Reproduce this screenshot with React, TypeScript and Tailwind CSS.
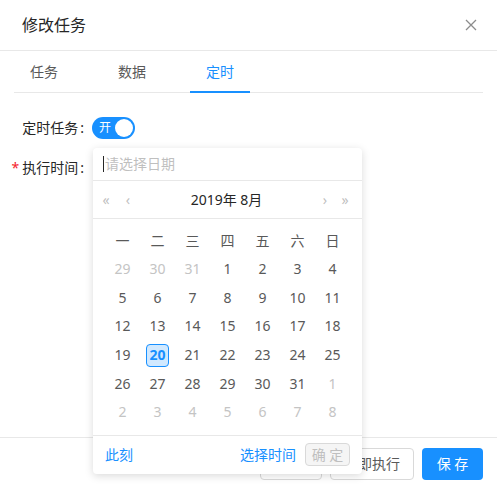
import React from "react";

const weekDays = ["一", "二", "三", "四", "五", "六", "日"];

type Day = { n: number; other: boolean };

const buildDays = (): Day[] => {
  const days: Day[] = [];
  [29, 30, 31].forEach((n) => days.push({ n, other: true }));
  for (let i = 1; i <= 31; i++) days.push({ n: i, other: false });
  for (let i = 1; i <= 8; i++) days.push({ n: i, other: true });
  return days;
};

const DatePanel: React.FC = () => {
  const days = buildDays();
  const rows: Day[][] = [];
  for (let i = 0; i < days.length; i += 7) rows.push(days.slice(i, i + 7));

  return (
    <div className="absolute left-[93px] top-[148px] w-[269px] rounded bg-white shadow-[0_2px_8px_rgba(0,0,0,0.15)] text-sm">
      {/* input */}
      <div className="h-[33px] flex items-center px-[10px] border-b border-[#e8e8e8]">
        <span className="w-px h-[16px] bg-[#262626] mr-px" />
        <span className="text-[#bfbfbf]">请选择日期</span>
      </div>
      {/* header */}
      <div className="h-[38px] flex items-center pl-[6px] pr-[10px] border-b border-[#e8e8e8] text-[#bfbfbf]">
        <span className="w-[14px] text-center">«</span>
        <span className="w-[14px] ml-[8px] text-center">‹</span>
        <span className="flex-1 text-center text-[#262626]">2019年 8月</span>
        <span className="w-[14px] mr-[6px] text-center">›</span>
        <span className="w-[14px] text-center">»</span>
      </div>
      {/* body */}
      <div className="px-[12px] pt-[8px] pb-[8px] border-b border-[#e8e8e8]">
        <div className="grid grid-cols-7 h-[28px] items-center text-[#595959]">
          {weekDays.map((d) => (
            <span key={d} className="text-center">
              {d}
            </span>
          ))}
        </div>
        {rows.map((row, ri) => (
          <div key={ri} className="grid grid-cols-7 h-[28.6px] items-center">
            {row.map((d, di) => {
              const selected = !d.other && d.n === 20;
              return (
                <div key={di} className="flex justify-center">
                  {selected ? (
                    <span className="w-[23px] h-[23px] flex items-center justify-center rounded-sm border border-[#1890ff] bg-[#d1e9ff] text-[#1890ff] font-bold">
                      {d.n}
                    </span>
                  ) : (
                    <span className={d.other ? "text-[#c4c4c4]" : "text-[#595959]"}>{d.n}</span>
                  )}
                </div>
              );
            })}
          </div>
        ))}
      </div>
      {/* footer */}
      <div className="h-[38px] flex items-center pl-[12px] pr-[12px]">
        <span className="text-[#1890ff]">此刻</span>
        <span className="ml-auto text-[#1890ff]">选择时间</span>
        <span className="ml-[9px] w-[45px] h-[23px] flex items-center justify-center rounded border border-[#d9d9d9] bg-[#f5f5f5] text-[#bfbfbf]">
          确 定
        </span>
      </div>
    </div>
  );
};

export default function App() {
  return (
    <div className="relative w-[497px] h-[486px] overflow-hidden bg-white font-['Noto_Sans','Noto_Sans_CJK_SC',sans-serif] text-sm">
      {/* header */}
      <div className="h-[51px] flex items-center justify-between pl-[22px] pr-[20px] border-b border-[#e8e8e8]">
        <span className="text-base text-[#262626]">修改任务</span>
        <svg width="12" height="12" viewBox="0 0 12 12" className="text-[#8c8c8c]">
          <path d="M1 1 L11 11 M11 1 L1 11" stroke="currentColor" strokeWidth="1.3" />
        </svg>
      </div>

      {/* body */}
      <div className="px-[14px] h-[386px]">
        <div className="flex gap-[28px] border-b border-[#e8e8e8] h-[42px]">
          <div className="px-4 pt-[11px] text-[#595959]">任务</div>
          <div className="px-4 pt-[11px] text-[#595959]">数据</div>
          <div className="relative px-4 pt-[11px] text-[#1890ff]">
            定时
            <span className="absolute left-0 right-0 bottom-[-1px] h-[2px] bg-[#1890ff]" />
          </div>
        </div>

        <div className="pt-[15px]">
          <div className="flex items-center h-[40px]">
            <div className="w-[78px] shrink-0 flex justify-end whitespace-nowrap text-[#262626]">
              定时任务<span className="ml-[2px] mr-[8px]">:</span>
            </div>
            <div className="w-[43px] h-[22px] rounded-full bg-[#1890ff] flex items-center pl-[7px] pr-[2px]">
              <span className="text-white text-xs">开</span>
              <span className="ml-auto w-[18px] h-[18px] rounded-full bg-white" />
            </div>
          </div>
          <div className="flex items-center h-[40px]">
            <div className="w-[78px] shrink-0 flex justify-end whitespace-nowrap text-[#262626]">
              <span className="text-[#f5222d] mr-[3px]">*</span>
              执行时间<span className="ml-[2px] mr-[8px]">:</span>
            </div>
          </div>
        </div>
      </div>

      {/* footer */}
      <div className="border-t border-[#e8e8e8] flex justify-end gap-[8px] pt-[10px] pr-[14px]">
        <div className="w-[62px] h-[32px] rounded border border-[#d9d9d9] flex items-center justify-center text-[#595959]">
          取 消
        </div>
        <div className="w-[84px] h-[32px] rounded border border-[#d9d9d9] flex items-center justify-center text-[#595959]">
          立即执行
        </div>
        <div className="w-[61px] h-[32px] rounded bg-[#1890ff] flex items-center justify-center text-white">
          保 存
        </div>
      </div>

      <DatePanel />
    </div>
  );
}
